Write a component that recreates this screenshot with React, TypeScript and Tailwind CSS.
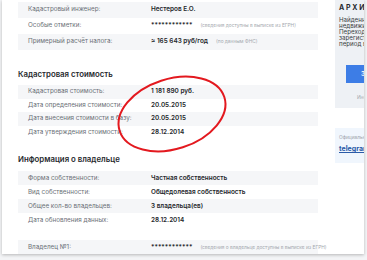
import React from 'react';

type Row = { label: string; value: string; note?: string };

const topRows: Row[] = [
  { label: 'Кадастровый инженер:', value: 'Нестеров Е.О.' },
  { label: 'Особые отметки:', value: '************', note: '(сведения доступны в выписке из ЕГРН)' },
  { label: 'Примерный расчёт налога:', value: '≈ 165 643 руб/год', note: '(по данным ФНС)' },
];

const costRows: Row[] = [
  { label: 'Кадастровая стоимость:', value: '1 181 890 руб.' },
  { label: 'Дата определения стоимости:', value: '20.05.2015' },
  { label: 'Дата внесения стоимости в базу:', value: '20.05.2015' },
  { label: 'Дата утверждения стоимости:', value: '28.12.2014' },
];

const ownerRows: Row[] = [
  { label: 'Форма собственности:', value: 'Частная собственность' },
  { label: 'Вид собственности:', value: 'Общедолевая собственность' },
  { label: 'Общее кол-во владельцев:', value: '3 владельца(ев)' },
  { label: 'Дата обновления данных:', value: '28.12.2014' },
];

const InfoRows = ({ rows, rowH }: { rows: Row[]; rowH: string }) => (
  <div className="flex flex-col">
    {rows.map((r, i) => (
      <div
        key={r.label}
        className={`flex items-center ${rowH} ${i % 2 === 0 ? 'bg-[#f5f6f8]' : 'bg-white'}`}
      >
        <div className="w-[133px] shrink-0 pl-[10px] text-[6.3px] text-[#6a6f76] whitespace-nowrap">{r.label}</div>
        <div className="flex items-center gap-[8px] whitespace-nowrap">
          <span className="text-[6.4px] font-semibold text-[#25282c]">{r.value}</span>
          {r.note && <span className="text-[4.8px] text-[#a3a7ad]">{r.note}</span>}
        </div>
      </div>
    ))}
  </div>
);

const SectionTitle = ({ children }: { children: React.ReactNode }) => (
  <h2 className="text-[7.8px] font-semibold text-[#26292d] leading-[10px]">{children}</h2>
);

export default function App() {
  return (
    <div className="w-[367px] h-[260px] overflow-hidden bg-[#f3f4f6]" style={{ fontFamily: 'Inter, "Noto Sans", sans-serif' }}>
      <div className="relative ml-[2px] w-[362px] h-[254px] bg-white shadow-[0_1px_3px_rgba(0,0,0,0.25)] overflow-hidden flex">
        {/* main column */}
        <div className="w-[331px] shrink-0 pl-[16px] pr-[15px] pt-[2px]">
          <InfoRows rows={topRows} rowH="h-[16px]" />

          <div className="mt-[19px] mb-[6px]">
            <SectionTitle>Кадастровая стоимость</SectionTitle>
          </div>
          <InfoRows rows={costRows} rowH="h-[13.6px]" />

          <div className="mt-[15px] mb-[7px]">
            <SectionTitle>Информация о владельце</SectionTitle>
          </div>
          <InfoRows rows={ownerRows} rowH="h-[14px]" />

          <div className="mt-[13px]">
            <InfoRows
              rowH="h-[14px]"
              rows={[{ label: 'Владелец №1:', value: '************', note: '(сведения о владельце доступны в выписке из ЕГРН)' }]}
            />
          </div>
        </div>

        {/* sidebar */}
        <div className="flex-1 pl-[2px] flex flex-col">
          <div className="h-[108px] bg-[#eef1f5] pl-[4px] pt-[3px] overflow-hidden">
            <div className="text-[7px] font-bold tracking-[1.8px] text-[#26292d] whitespace-nowrap">АРХИВНЫЕ ДАННЫЕ</div>
            <div className="mt-[3px] text-[6.2px] leading-[6px] text-[#3a3e44] whitespace-nowrap">
              <div>Найденные</div>
              <div>недвижимости</div>
              <div>Переход права</div>
              <div>зарегистрирован</div>
              <div>период владения</div>
            </div>
            <div className="mt-[18px] ml-[7px] h-[18px] bg-[#3d7de6] pl-[15px] flex items-center text-[6px] font-semibold text-white whitespace-nowrap">
              Заказать
            </div>
            <div className="mt-[11px] pl-[18px] text-[4.8px] text-[#a1a6ad] whitespace-nowrap">Информация</div>
          </div>

          <div className="mt-[20px] h-[35px] bg-[#f0f6fd] pl-[4px] pt-[6px] overflow-hidden">
            <div className="text-[4.8px] text-[#9ba1a9] whitespace-nowrap">Официальный</div>
            <div className="mt-[3px] text-[7px] font-bold text-[#2b5ba8] underline whitespace-nowrap">telegram</div>
          </div>
        </div>

        {/* red hand-drawn ellipse */}
        <svg className="absolute left-0 top-0 pointer-events-none" width="362" height="254" viewBox="0 0 362 254">
          <ellipse
            cx="170"
            cy="114"
            rx="55"
            ry="35"
            transform="rotate(-18 170 114)"
            fill="none"
            stroke="#e3191f"
            strokeWidth="2"
          />
        </svg>
      </div>
    </div>
  );
}
